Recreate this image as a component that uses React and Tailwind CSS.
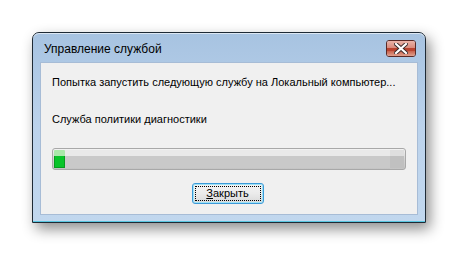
import React from 'react';

const font = { fontFamily: '"Liberation Sans", Arial, sans-serif' };

const CloseButton = () => (
  <div className="w-[30px] h-[17px] rounded-[3px] border border-[#5a2a26] overflow-hidden flex flex-col relative shadow-[inset_0_0_0_1px_rgba(255,255,255,0.45)]">
    <div className="h-[7px] bg-gradient-to-b from-[#eab3a8] to-[#d98a7c]" />
    <div className="h-[3px] bg-[#b9432f]" />
    <div className="flex-1 bg-gradient-to-b from-[#c8614c] to-[#e0a08e]" />
    <div className="absolute inset-0 flex items-center justify-center">
      <svg width="14" height="11" viewBox="0 0 14 11">
        <path d="M2 1 L12 10 M12 1 L2 10" stroke="#3a2a2a" strokeWidth="4" strokeLinecap="square" />
        <path d="M2 1 L12 10 M12 1 L2 10" stroke="#ffffff" strokeWidth="2.2" strokeLinecap="square" />
      </svg>
    </div>
  </div>
);

const ProgressBar = () => (
  <div className="h-[22px] mx-[11px] rounded-[3px] border border-[#a8a8a8] bg-gradient-to-b from-[#f3f3f3] via-[#d4d4d4] to-[#c4c4c4] p-[1px] flex">
    <div className="w-[11px] h-full rounded-[1px] flex flex-col overflow-hidden">
      <div className="h-[6px] bg-[#a9e8a9]" />
      <div className="flex-1 bg-[#08c429] border border-[#079b1f] border-t-0" />
    </div>
    <div className="flex-1 flex flex-col">
      <div className="h-[6px] bg-[#e9e9e9]" />
      <div className="flex-1 bg-[#c9c9c9]" />
    </div>
    <div className="w-[14px] flex flex-col">
      <div className="h-[6px] bg-[#dedede]" />
      <div className="flex-1 bg-[#c0c0c0]" />
    </div>
  </div>
);

export default function App() {
  return (
    <div className="w-[458px] h-[255px] bg-white pt-[32px] pl-[32px]" style={font}>
      <div className="w-[394px] h-[191px] rounded-t-[7px] border border-[#1e2a35] shadow-[4px_6px_14px_rgba(0,0,0,0.45)] bg-gradient-to-b from-[#a7c3e1] via-[#bcd3ec] to-[#c1d7ee] flex flex-col">
        <div className="h-[29px] flex items-center justify-between pl-[11px] pr-[9px] shadow-[inset_0_1px_0_rgba(255,255,255,0.6)] rounded-t-[6px]">
          <span className="text-[12px] text-black leading-none mt-[2px] whitespace-nowrap">Управление службой</span>
          <div className="mt-[2px]">
            <CloseButton />
          </div>
        </div>
        <div className="flex-1 mx-[7px] mb-[6px] bg-[#f0f0f0] border border-[#a7bcd6] flex flex-col">
          <div className="pl-[11px] pt-[11px] text-[11px] leading-[16px] text-black whitespace-nowrap">
            Попытка запустить следующую службу на Локальный компьютер...
          </div>
          <div className="pl-[11px] pt-[21px] text-[11px] leading-[16px] text-black whitespace-nowrap">
            Служба политики диагностики
          </div>
          <div className="pt-[21px]">
            <ProgressBar />
          </div>
          <div className="flex justify-center pt-[13px] pr-[3px]">
            <div className="w-[72px] h-[21px] rounded-[3px] border border-[#3c9ad8] shadow-[inset_0_0_0_1px_#9fe2f7] bg-gradient-to-b from-[#f4f4f4] via-[#ebebeb] to-[#d9d9d9] p-[2px]">
              <div className="w-full h-full border border-dotted border-black flex items-center justify-center text-[11px] leading-none text-black">
                <span><span className="underline">З</span>акрыть</span>
              </div>
            </div>
          </div>
        </div>
        <div className="h-[1px] bg-[#59c6e0]" />
      </div>
    </div>
  );
}
